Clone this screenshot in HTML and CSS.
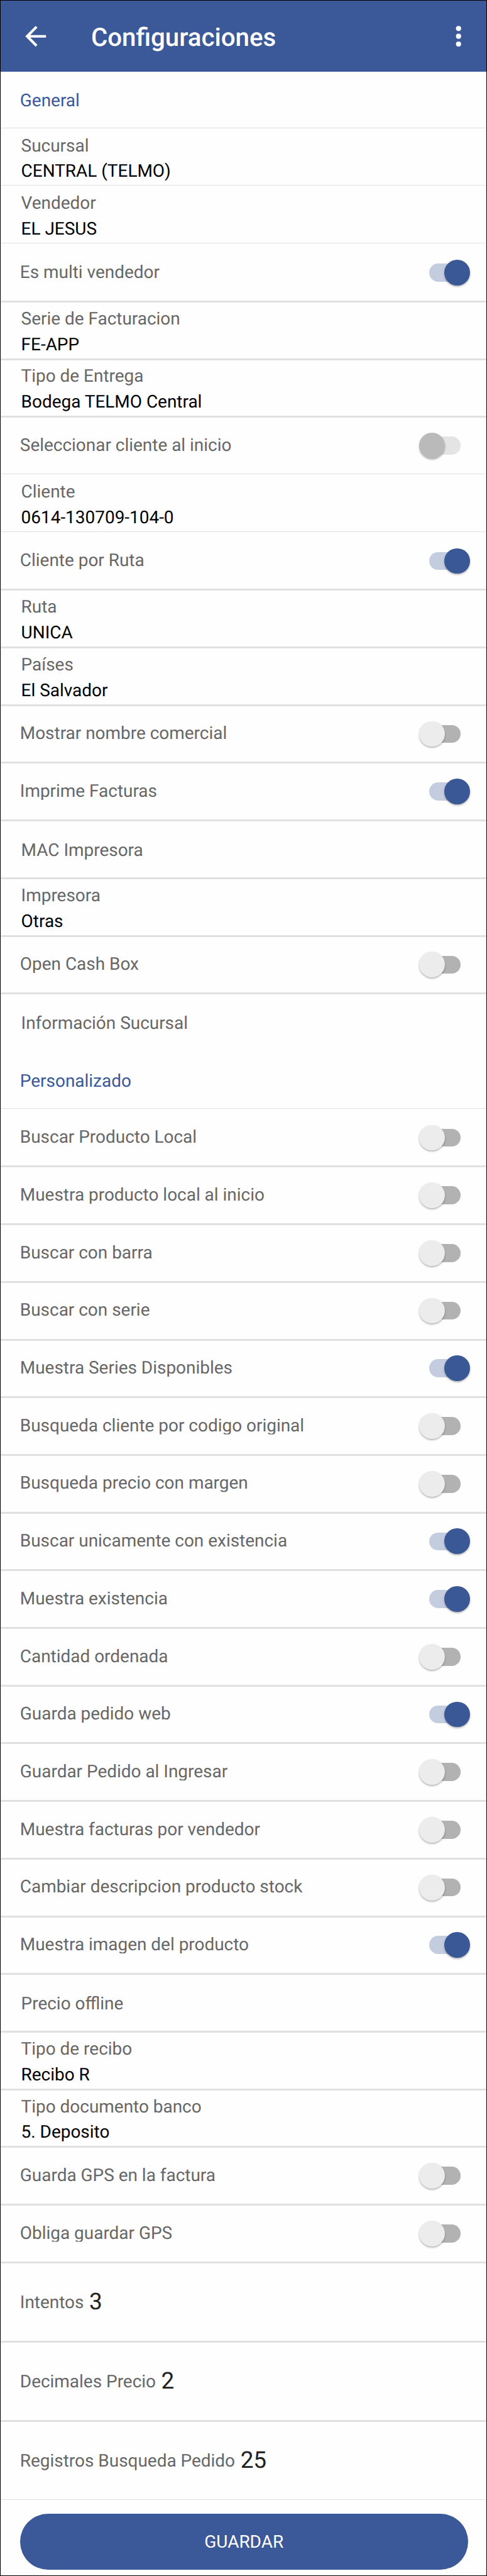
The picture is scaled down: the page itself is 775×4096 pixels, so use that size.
FILE: index.html
```html
<!DOCTYPE html>
<html lang="es">
<head>
<meta charset="utf-8">
<title>Configuraciones</title>
<link rel="stylesheet" href="styles.css">
</head>
<body>
<div class="screen">
  <header class="bar">
    <svg class="back" viewBox="0 0 24 24"><path d="M20 11H7.8l5.6-5.6L12 4l-8 8 8 8 1.4-1.4L7.8 13H20z"/></svg>
    <h1 class="title">Configuraciones</h1>
    <svg class="more" viewBox="0 0 24 24"><circle cx="12" cy="6" r="2"/><circle cx="12" cy="12" r="2"/><circle cx="12" cy="18" r="2"/></svg>
  </header>
  <main class="list">
    <h2 class="row section first">General</h2>
    <div class="row thin field"><span>Sucursal</span><b>CENTRAL (TELMO)</b></div>
    <div class="row thin field"><span>Vendedor</span><b>EL JESUS</b></div>
    <div class="row thin toggle"><span>Es multi vendedor</span><i class="switch on"></i></div>
    <div class="row field"><span>Serie de Facturacion</span><b>FE-APP</b></div>
    <div class="row field"><span>Tipo de Entrega</span><b>Bodega TELMO Central</b></div>
    <div class="row toggle"><span>Seleccionar cliente al inicio</span><i class="switch disabled"></i></div>
    <div class="row thin field"><span>Cliente</span><b>0614-130709-104-0</b></div>
    <div class="row thin toggle"><span>Cliente por Ruta</span><i class="switch on"></i></div>
    <div class="row field"><span>Ruta</span><b>UNICA</b></div>
    <div class="row field"><span>Países</span><b>El Salvador</b></div>
    <div class="row toggle"><span>Mostrar nombre comercial</span><i class="switch"></i></div>
    <div class="row toggle"><span>Imprime Facturas</span><i class="switch on"></i></div>
    <div class="row single">MAC Impresora</div>
    <div class="row field"><span>Impresora</span><b>Otras</b></div>
    <div class="row toggle"><span>Open Cash Box</span><i class="switch"></i></div>
    <div class="row single">Información Sucursal</div>
    <h2 class="row flush section">Personalizado</h2>
    <div class="row thin toggle"><span>Buscar Producto Local</span><i class="switch"></i></div>
    <div class="row toggle"><span>Muestra producto local al inicio</span><i class="switch"></i></div>
    <div class="row toggle"><span>Buscar con barra</span><i class="switch"></i></div>
    <div class="row toggle"><span>Buscar con serie</span><i class="switch"></i></div>
    <div class="row toggle"><span>Muestra Series Disponibles</span><i class="switch on"></i></div>
    <div class="row toggle"><span>Busqueda cliente por codigo original</span><i class="switch"></i></div>
    <div class="row toggle"><span>Busqueda precio con margen</span><i class="switch"></i></div>
    <div class="row toggle"><span>Buscar unicamente con existencia</span><i class="switch on"></i></div>
    <div class="row toggle"><span>Muestra existencia</span><i class="switch on"></i></div>
    <div class="row toggle"><span>Cantidad ordenada</span><i class="switch"></i></div>
    <div class="row toggle"><span>Guarda pedido web</span><i class="switch on"></i></div>
    <div class="row toggle"><span>Guardar Pedido al Ingresar</span><i class="switch"></i></div>
    <div class="row toggle"><span>Muestra facturas por vendedor</span><i class="switch"></i></div>
    <div class="row toggle"><span>Cambiar descripcion producto stock</span><i class="switch"></i></div>
    <div class="row toggle"><span>Muestra imagen del producto</span><i class="switch on"></i></div>
    <div class="row single">Precio offline</div>
    <div class="row field"><span>Tipo de recibo</span><b>Recibo R</b></div>
    <div class="row field"><span>Tipo documento banco</span><b>5. Deposito</b></div>
    <div class="row toggle"><span>Guarda GPS en la factura</span><i class="switch"></i></div>
    <div class="row toggle"><span>Obliga guardar GPS</span><i class="switch"></i></div>
    <div class="row tall"><span>Intentos</span><b>3</b></div>
    <div class="row tall"><span>Decimales Precio</span><b>2</b></div>
    <div class="row tall"><span>Registros Busqueda Pedido</span><b>25</b></div>
    <footer class="row thin actions"><button class="save">GUARDAR</button></footer>
  </main>
</div>
</body>
</html>
```
FILE: styles.css
```css
:root {
  --u: 0.71645px;
  --blue: #3b5998;
}
* { box-sizing: border-box; }
body {
  margin: 0;
  font-family: Roboto, sans-serif;
  font-size: calc(39 * var(--u));
  line-height: calc(48 * var(--u));
  text-rendering: geometricPrecision;
  color: #676767;
}
.screen {
  display: flex;
  flex-direction: column;
  height: 4096px;
  border: 1px solid #000;
  overflow: hidden;
}
.bar {
  flex: none;
  display: flex;
  align-items: center;
  height: calc(158.5 * var(--u) - 1px);
  padding: 0 calc(28 * var(--u)) 0 calc(43 * var(--u));
  background: var(--blue);
  color: #fff;
}
.back, .more {
  width: calc(69 * var(--u));
  height: calc(69 * var(--u));
  fill: #fff;
}
.title {
  flex: 1;
  margin: 0 0 0 calc(89 * var(--u));
  padding-top: calc(7.5 * var(--u));
  font-size: calc(56.2 * var(--u));
  line-height: calc(68 * var(--u));
  font-weight: 500;
}
/* Separators are the list background showing between the rows. */
.list {
  flex: 1;
  background: #e0e0e0;
}
.row {
  --line: 3px;
  height: calc(128 * var(--u) - var(--line));
  margin: var(--line) 0 0;
  padding-left: calc(43 * var(--u));
  background: #fefefe;
  font-size: inherit;
  font-weight: 400;
}
.row b { font-weight: 400; }
.thin { --line: 1px; }
.flush { --line: 0px; }
.section {
  padding-top: calc(44.3 * var(--u));
  color: var(--blue);
}
.section.first {
  --line: 0px;
  height: calc(124.5 * var(--u));
  padding-top: calc(41.2 * var(--u));
}
.field {
  display: flex;
  flex-direction: column;
  gap: calc(9 * var(--u));
  padding-top: calc(16.6 * var(--u) - var(--line));
  padding-left: calc(45.5 * var(--u));
}
.field b { color: #000; }
.single {
  padding-top: calc(44.3 * var(--u) - var(--line));
  padding-left: calc(45.5 * var(--u));
}
.toggle {
  display: flex;
  justify-content: space-between;
  padding-top: calc(37.5 * var(--u) - var(--line));
  padding-right: calc(30 * var(--u));
}
/* The label box ends just under the baseline and trims the descenders. */
.toggle span {
  height: calc(48 * var(--u));
  margin-top: calc(3.8 * var(--u));
  clip-path: inset(0 0 calc(4.8 * var(--u)) 0);
}
.switch {
  position: relative;
  width: calc(126 * var(--u));
  height: calc(57 * var(--u));
}
.switch::before, .switch::after {
  content: "";
  position: absolute;
}
.switch::before {
  top: calc(8.5 * var(--u));
  left: calc(28.5 * var(--u));
  width: calc(70 * var(--u));
  height: calc(40 * var(--u));
  border-radius: calc(20 * var(--u));
  background: #b2b2b2;
}
.switch::after {
  top: 0;
  left: calc(7 * var(--u));
  width: calc(57 * var(--u));
  height: calc(57 * var(--u));
  border-radius: 50%;
  background: #ececec;
  box-shadow: 0 calc(2.5 * var(--u)) calc(4 * var(--u)) rgba(0, 0, 0, 0.3);
}
.switch.on::before { background: #c4cde0; }
.switch.on::after {
  left: calc(63 * var(--u));
  background: #3a5896;
}
.switch.disabled::before { background: #e4e4e4; }
.switch.disabled::after { background: #bababa; }
.tall {
  display: flex;
  align-items: center;
  gap: calc(12 * var(--u));
  height: calc(176 * var(--u) - var(--line));
  padding-top: calc(3 * var(--u));
}
.tall b {
  font-size: calc(51.5 * var(--u));
  color: #212121;
}
.actions {
  height: calc(180 * var(--u));
  padding: calc(31 * var(--u)) calc(41 * var(--u)) 0 calc(43 * var(--u));
}
.save {
  display: block;
  width: 100%;
  height: calc(124 * var(--u));
  padding: calc(2 * var(--u)) 0 0;
  border: 0;
  border-radius: calc(62 * var(--u));
  background: var(--blue);
  color: #fff;
  font: inherit;
}
```
